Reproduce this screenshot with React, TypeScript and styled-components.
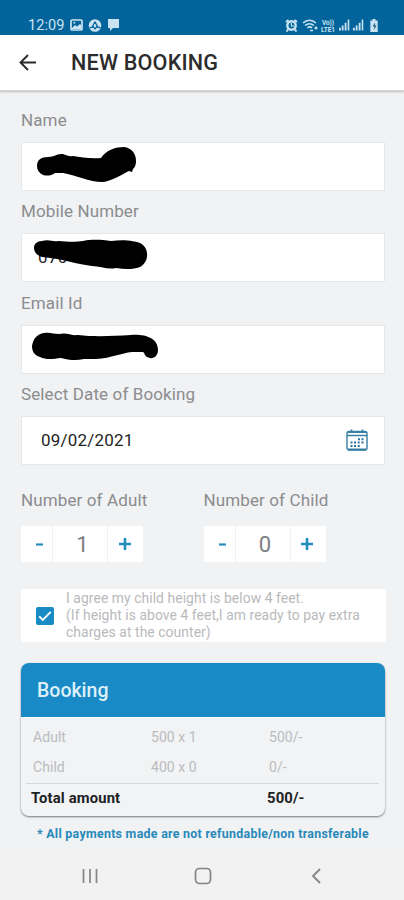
import React from "react";
import styled, { createGlobalStyle } from "styled-components";

const Global = createGlobalStyle`
  * { box-sizing: border-box; }
  body { margin: 0; background: #f0f2f4; font-family: Roboto, sans-serif; }
`;

const Screen = styled.div`
  width: 404px;
  height: 900px;
  display: flex;
  flex-direction: column;
  background: #f0f2f4;
  overflow: hidden;
`;

const StatusBar = styled.div`
  height: 35px;
  flex: none;
  display: flex;
  align-items: flex-end;
  justify-content: space-between;
  padding: 0 24px 1px 28px;
  background: #02649b;
  color: #c9e3f2;
`;

const StatusGroup = styled.div<{ $gap: number }>`
  display: flex;
  align-items: center;
  gap: ${(p) => p.$gap}px;
  height: 18px;
  svg { display: block; }
`;

const Clock = styled.span`
  font-size: 14.6px;
  line-height: 18px;
  width: 37px;
  letter-spacing: 0;
`;

const Header = styled.header`
  height: 56px;
  flex: none;
  display: flex;
  align-items: center;
  gap: 34px;
  padding: 0 19px;
  background: #fff;
  border-bottom: 1px solid #d3d5d6;
  box-shadow: 0 1px 2px rgba(0, 0, 0, 0.22);
`;

const Title = styled.h1`
  margin: 0;
  font-size: 21.6px;
  line-height: 28px;
  font-weight: 500;
  letter-spacing: 0.2px;
  color: #2c2c2c;
`;

const Form = styled.main`
  padding: 18px 19px 0 21px;
  flex: 1;
`;

const Label = styled.div`
  height: 24px;
  line-height: 23px;
  font-size: 17px;
  letter-spacing: 0.12px;
  color: #8b8c8e;
  white-space: nowrap;
`;

const FieldGroup = styled.div`
  height: 91.35px;
`;

const Field = styled.div`
  position: relative;
  height: 49px;
  margin-top: 9px;
  padding: 0 16px 2px 19px;
  display: flex;
  align-items: center;
  justify-content: space-between;
  background: #fff;
  border: 1px solid #e5e7e9;
  font-size: 17px;
  color: #252525;
`;

const DateText = styled.span`
  letter-spacing: 0.2px;
`;

const MobileDigits = styled.span`
  margin: 0 0 0 -3px;
  letter-spacing: 0.35px;
`;

const Scribble = styled.svg<{ $top: number }>`
  position: absolute;
  left: -2px;
  top: ${(p) => p.$top}px;
`;

const Counters = styled.div`
  display: grid;
  grid-template-columns: 182.5px 1fr;
  margin-top: 15px;
`;

const Stepper = styled.div`
  display: grid;
  grid-template-columns: 31px 54px 35px;
  gap: 1px;
  width: 122px;
  height: 36px;
  margin-top: 13px;
  align-items: stretch;
  background: #f0f1f2;
`;

const Cell = styled.div<{ $kind: "minus" | "value" | "plus" }>`
  display: flex;
  align-items: center;
  justify-content: center;
  background: #fff;
  font-size: 22px;
  color: #7c7d7e;
  padding-left: ${(p) => (p.$kind === "value" ? 5 : p.$kind === "minus" ? 6 : 0)}px;
  padding-right: ${(p) => (p.$kind === "plus" ? 2 : 0)}px;
`;

const Agreement = styled.div`
  display: flex;
  align-items: center;
  height: 53px;
  margin-top: 27px;
  margin-right: -1px;
  padding-left: 15px;
  gap: 12px;
  background: #fff;
  border-radius: 2px;
`;

const Checkbox = styled.div`
  width: 18px;
  height: 18px;
  border-radius: 2px;
  background: #1a8bc5;
  flex: none;
  svg { display: block; }
`;

const Terms = styled.p`
  margin: -1px 0 0;
  font-size: 13.9px;
  line-height: 16.6px;
  letter-spacing: 0.06px;
  color: #b9babb;
  white-space: nowrap;
`;

const Card = styled.section`
  height: 153px;
  margin-top: 21px;
  border-radius: 8px;
  background: #f1f3f5;
  box-shadow: 0 1px 2px rgba(0, 0, 0, 0.5);
  overflow: hidden;
`;

const CardHead = styled.div`
  height: 55px;
  line-height: 56px;
  padding-left: 16px;
  background: #198ac5;
  border-bottom: 1px solid #fafcfd;
  color: #dcf0fa;
  font-size: 19.5px;
  font-weight: 500;
`;

const PriceRow = styled.div<{ $total?: boolean }>`
  display: grid;
  grid-template-columns: ${(p) => (p.$total ? "236px 1fr" : "118px 118px 1fr")};
  margin: 0 6px 0 5px;
  padding-left: ${(p) => (p.$total ? 5 : 7)}px;
  height: 30px;
  line-height: ${(p) => (p.$total ? 28 : 28)}px;
  font-size: ${(p) => (p.$total ? 14.8 : 14)}px;
  font-weight: ${(p) => (p.$total ? 700 : 400)};
  letter-spacing: ${(p) => (p.$total ? 0.15 : 0.05)}px;
  color: ${(p) => (p.$total ? "#202122" : "#bbbcbe")};
  border-top: ${(p) => (p.$total ? "1px solid #d5d6d8" : "none")};
`;

const PriceList = styled.div`
  padding-top: 5px;
`;

const Notice = styled.div`
  margin-top: 9px;
  line-height: 17px;
  padding-left: 16px;
  font-size: 12.4px;
  font-weight: 700;
  letter-spacing: 0.28px;
  color: #2889b9;
  white-space: nowrap;
`;

const NavBar = styled.nav`
  height: 50px;
  flex: none;
  display: flex;
  align-items: center;
  justify-content: space-between;
  padding: 2px 80px 0 79px;
  background: #f2f2f2;
  svg { display: block; }
`;

const marks = {
  name: "M17 24C17 18 21 15 28 15C35 15 36 12 41 12C46 12 47 15 53 14C61 15 70 17 81 16C86 8 96 5 104 5C112 6 116 12 116 19C116 23 115 25 113 27L112 30L109 29C101 33 90 40 82 40C70 40 55 33 43 31H35C31 34 27 34 23 33C19 31 17 28 17 24Z",
  mobile: "M14 15C14 11 17 8 22 8C29 6 33 9 38 8C49 9 56 9 63 8C73 6 82 7 91 8C104 6 115 8 120 10C130 15 129 29 120 34C112 37 104 36 96 35C88 37 80 33 72 33C65 32 60 31 55 30C44 27 33 25 22 24C16 22 14 18 14 15Z",
  email: "M12 22C13 15 17 10 24 9C31 8 33 10 39 10C47 8 51 12 58 11C75 13 92 12 111 11C125 10 138 14 138 26C138 33 132 36 127 33C124 31 125 29 123 28L112 28C101 29 92 34 76 35H64C56 37 48 36 41 34C33 35 26 36 20 33C14 31 12 27 12 22Z",
};

const Redaction = ({ d, top = -1 }: { d: string; top?: number }) => (
  <Scribble $top={top} width="145" height="50" viewBox="0 0 145 50">
    <path d={d} fill="#000" />
  </Scribble>
);

const CalendarIcon = () => (
  <svg width="22" height="22" viewBox="0 0 22 22" fill="none" stroke="#397fa4">
    <rect x="1" y="2.5" width="20" height="18.5" rx="2" strokeWidth="1.4" />
    <path d="M1 6.5h20M5.5 .5v3M16.5 .5v3" strokeWidth="1.6" />
    <path d="M2 3h18M2 20.5h18" strokeWidth="1.8" />
    <path
      d="M12 10.2h2M15.5 10.2h2M4.5 13.6h2M8 13.6h2M11.7 13.6h2M15.5 13.6h2M4.5 17h2M8 17h2M11.7 17h2"
      strokeWidth="2"
      stroke="#2974a3"
    />
  </svg>
);

const Signal = () => (
  <svg width="11" height="12" viewBox="0 0 12 12" fill="currentColor">
    <path d="M0 9h2v3H0zM3 6.5h2V12H3zM6.2 3.5h2V12h-2zM9.5 0h1.7v12H9.5z" />
  </svg>
);

const Counter = ({ label, value }: { label: string; value: number }) => (
  <div>
    <Label>{label}</Label>
    <Stepper>
      <Cell $kind="minus">
        <svg width="7" height="3"><path d="M0 1.5h7" stroke="#258dbd" strokeWidth="2.2" /></svg>
      </Cell>
      <Cell $kind="value">{value}</Cell>
      <Cell $kind="plus">
        <svg width="12" height="12"><path d="M0 6h12M6 0v12" stroke="#258dbd" strokeWidth="2.6" /></svg>
      </Cell>
    </Stepper>
  </div>
);

export default function App() {
  return (
    <Screen>
      <Global />
      <StatusBar>
        <StatusGroup $gap={5}>
          <Clock>12:09</Clock>
          <svg width="13" height="12" viewBox="0 0 13 12">
            <rect x="1" y="1" width="11" height="10" rx="1" fill="none" stroke="currentColor" strokeWidth="1.7" />
            <path d="M2 9l3-3 2 1.5L10 5l1 1v4H2z" fill="currentColor" />
            <circle cx="4.3" cy="3.8" r="1" fill="currentColor" />
          </svg>
          <svg width="14" height="13" viewBox="0 0 14 13">
            <circle cx="7" cy="6.5" r="6.3" fill="currentColor" />
            <path d="M7 2.8L4.2 8M7 2.8L9.8 8M1.5 8.8l3.8-1 1.7 2 1.7-2 3.8 1" fill="none" stroke="#02649b" strokeWidth="1.3" />
          </svg>
          <svg width="13" height="12" viewBox="0 0 13 12" fill="currentColor">
            <path d="M1 0h11v9H6l-3 3V9H1z" />
          </svg>
        </StatusGroup>
        <StatusGroup $gap={3.6}>
          <svg width="13" height="13" viewBox="0 0 13 13">
            <path d="M1 3l2.5-2M12 3L9.5 1M3.5 10L1.5 12.5M9.5 10l2 2.5" stroke="currentColor" strokeWidth="2" />
            <circle cx="6.5" cy="6.5" r="4.2" fill="none" stroke="currentColor" strokeWidth="2.4" />
            <path d="M6.4 4v3H9" fill="none" stroke="currentColor" strokeWidth="1.2" />
          </svg>
          <svg width="16" height="13" viewBox="0 0 16 13" fill="none" stroke="currentColor">
            <path d="M1 4c4-3.5 9-3.5 13 0M3 6.5c3-2.4 6-2.4 9 0M5.5 8.8c1.5-1.2 3-1.2 4.5 0" strokeWidth="1.6" />
            <path d="M8 11.5h3M14 7.5v3M12.5 9h3" strokeWidth="1.5" />
          </svg>
          <svg width="14" height="13" viewBox="0 0 14 13" fill="currentColor" fontFamily="Roboto" fontWeight="700">
            <text x="1" y="6" fontSize="6.5" textLength="12">Vo))</text>
            <text x="0" y="12.5" fontSize="6.5" textLength="14">LTE1</text>
          </svg>
          <Signal />
          <Signal />
          <svg width="12" height="13" viewBox="0 0 12 13">
            <path d="M4.5 0h3v1.5h2.2V13H2.3V1.5h2.2z" fill="currentColor" />
            <path d="M7.2 3.5L4.6 7.2h2L5.8 11l2.8-4.5h-2z" fill="#174b67" />
          </svg>
        </StatusGroup>
      </StatusBar>
      <Header>
        <svg width="18" height="17" viewBox="0 0 18 17" fill="none" stroke="#2b2b2b" strokeWidth="1.9">
          <path d="M17 8.5H1.8M9 1L1.5 8.5 9 16" />
        </svg>
        <Title>NEW BOOKING</Title>
      </Header>
      <Form>
        <FieldGroup>
          <Label>Name</Label>
          <Field><Redaction d={marks.name} top={-1} /></Field>
        </FieldGroup>
        <FieldGroup>
          <Label>Mobile Number</Label>
          <Field>
            <MobileDigits>070</MobileDigits>
            <Redaction d={marks.mobile} />
          </Field>
        </FieldGroup>
        <FieldGroup>
          <Label>Email Id</Label>
          <Field><Redaction d={marks.email} top={-2} /></Field>
        </FieldGroup>
        <FieldGroup>
          <Label>Select Date of Booking</Label>
          <Field>
            <DateText>09/02/2021</DateText>
            <CalendarIcon />
          </Field>
        </FieldGroup>
        <Counters>
          <Counter label="Number of Adult" value={1} />
          <Counter label="Number of Child" value={0} />
        </Counters>
        <Agreement>
          <Checkbox>
            <svg width="18" height="18" viewBox="0 0 18 18" fill="none" stroke="#fff" strokeWidth="1.9">
              <path d="M3.2 9.3l3.6 3.6 8-8" />
            </svg>
          </Checkbox>
          <Terms>
            I agree my child height is below 4 feet.<br />
            (If height is above 4 feet,I am ready to pay extra<br />
            charges at the counter)
          </Terms>
        </Agreement>
        <Card>
          <CardHead>Booking</CardHead>
          <PriceList>
            <PriceRow><span>Adult</span><span>500 x 1</span><span>500/-</span></PriceRow>
            <PriceRow><span>Child</span><span>400 x 0</span><span>0/-</span></PriceRow>
            <PriceRow $total><span>Total amount</span><span>500/-</span></PriceRow>
          </PriceList>
        </Card>
        <Notice>* All payments made are not refundable/non transferable</Notice>
      </Form>
      <NavBar>
        <svg width="22" height="16" viewBox="0 0 22 16" stroke="#858585" strokeWidth="1.7">
          <path d="M4.5 1v14M11 1v14M17.5 1v14" />
        </svg>
        <svg width="22" height="18" viewBox="0 0 22 18" fill="none" stroke="#858585" strokeWidth="1.7">
          <rect x="1.5" y="1.5" width="15" height="15" rx="4" />
        </svg>
        <svg width="16" height="16" viewBox="0 0 16 16" fill="none" stroke="#858585" strokeWidth="1.8">
          <path d="M12 1L5 8l7 7" />
        </svg>
      </NavBar>
    </Screen>
  );
}
